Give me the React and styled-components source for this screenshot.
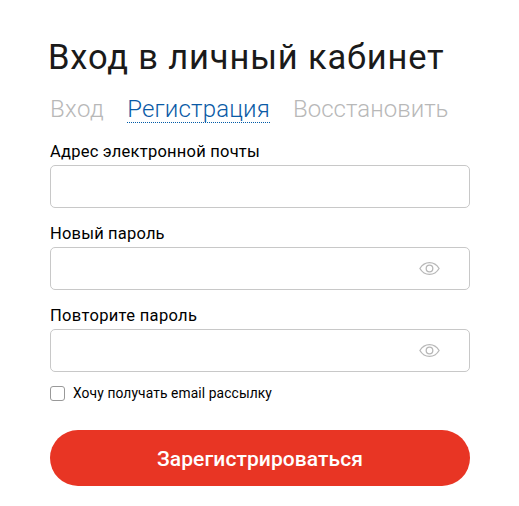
import React,{useState} from "react";
import styled,{createGlobalStyle} from 'styled-components';

const GlobalStyle=createGlobalStyle`
*{
box-sizing:border-box;
}
body{
margin:0;
background-color:#ffffff;
color:#000000;
font-family:Roboto, "Noto Sans", sans-serif;
}
`
const Page=styled.main`
width:519px;
padding:36px 49px 20px 50px;
`
const Title=styled.h1`
margin:0 0 0 -2px;
height:42px;
line-height:42px;
font-size:34.5px;
font-weight:400;
letter-spacing:0.84px;
white-space:nowrap;
color:#1a1a1a;
`
const Tabs=styled.nav`
display:flex;
gap:23px;
margin-top:18px;
height:45px;
`
const Tab=styled.button`
height:27px;
padding:0;
border:0;
border-bottom:1px dotted ${(props)=>props.$active ? "#005ba8" : "transparent"};
background:none;
font-family:inherit;
font-size:24px;
font-weight:300;
line-height:26px;
letter-spacing:${(props)=>props.$spacing};
white-space:nowrap;
color:${(props)=>props.$active ? "#0a5aa6" : "#b8b8b8"};
cursor:pointer;
`
const Field=styled.div`
height:82px;
`
const Label=styled.label`
display:block;
height:24px;
line-height:22px;
font-size:16.5px;
letter-spacing:${(props)=>props.$spacing};
`
const InputBox=styled.div`
display:flex;
align-items:center;
height:43px;
padding-right:29px;
border:1px solid #c8c8c8;
border-radius:5px;
`
const Input=styled.input`
flex:1;
min-width:0;
height:100%;
padding:0 14px;
border:0;
outline:none;
background:none;
font:inherit;
`
const EyeButton=styled.button`
display:flex;
padding:0;
border:0;
background:none;
cursor:pointer;
`
const CheckRow=styled.label`
display:flex;
align-items:center;
height:15px;
margin-top:-1px;
gap:8px;
font-size:13.8px;
line-height:15px;
letter-spacing:0.11px;
white-space:nowrap;
`
const Checkbox=styled.input`
appearance:none;
width:15px;
height:15px;
margin:0;
border:1px solid #999999;
border-radius:3px;
background-color:${(props)=>props.checked ? "#e73424" : "#ffffff"};
`
const Submit=styled.button`
display:block;
width:100%;
height:56px;
margin-top:29px;
padding:1px 0 0;
border:0;
border-radius:28px;
background-color:#e83524;
color:#ffffff;
font-family:inherit;
font-size:21px;
font-weight:500;
letter-spacing:0.08px;
cursor:pointer;
`
const Eye=()=>(
    <svg width="21" height="14" viewBox="0 0 21 14" fill="none" stroke="#b8b8b8" strokeWidth="1.3">
        <path d="M0.9 6.5C5.6-1.3 15.4-1.3 20.1 6.5C15.4 14.3 5.6 14.3 0.9 6.5Z" strokeLinejoin="round"/>
        <circle cx="10.5" cy="6.5" r="3.3"/>
    </svg>
)

const tabs=[
    {name:"Вход",spacing:"0.4px"},
    {name:"Регистрация",spacing:"0.18px"},
    {name:"Восстановить",spacing:"0.03px"},
]
const fields=[
    {id:"email",label:"Адрес электронной почты",spacing:"0.23px"},
    {id:"password",label:"Новый пароль",spacing:"0.18px",secret:true},
    {id:"repeat",label:"Повторите пароль",spacing:"0.33px",secret:true},
]

export default function App(){
    const [active,setActive]=useState("Регистрация");
    const [visible,setVisible]=useState({});
    const [news,setNews]=useState(false);

    const toggle=(id)=>setVisible({...visible,[id]:!visible[id]});

    return (<>
    <GlobalStyle/>
    <Page>
        <Title>Вход в личный кабинет</Title>
        <Tabs>
            {tabs.map((tab)=>(
                <Tab key={tab.name} $active={tab.name===active} $spacing={tab.spacing} onClick={()=>setActive(tab.name)}>{tab.name}</Tab>
            ))}
        </Tabs>
        <form onSubmit={(e)=>e.preventDefault()}>
            {fields.map((field)=>(
                <Field key={field.id}>
                    <Label htmlFor={field.id} $spacing={field.spacing}>{field.label}</Label>
                    <InputBox>
                        <Input id={field.id} type={field.secret && !visible[field.id] ? "password" : "text"}/>
                        {field.secret && <EyeButton type="button" onClick={()=>toggle(field.id)}><Eye/></EyeButton>}
                    </InputBox>
                </Field>
            ))}
            <CheckRow>
                <Checkbox type="checkbox" checked={news} onChange={(e)=>setNews(e.target.checked)}/>
                Хочу получать email рассылку
            </CheckRow>
            <Submit type="submit">Зарегистрироваться</Submit>
        </form>
    </Page>
    </>)
}
